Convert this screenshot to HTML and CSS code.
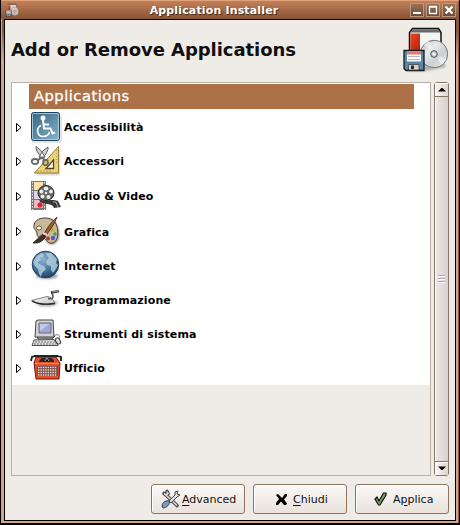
FILE: index.html
```html
<!DOCTYPE html>
<html lang="it">
<head>
<meta charset="utf-8">
<title>Application Installer</title>
<link rel="stylesheet" href="styles.css">
</head>
<body>
<svg class="defs" width="0" height="0">
  <defs>
    <linearGradient id="blue" x2="1" y2="1"><stop stop-color="#356381"/><stop offset="1" stop-color="#86b5cd"/></linearGradient>
    <radialGradient id="globe" cx=".4" cy=".3" r=".75"><stop stop-color="#8db4d0"/><stop offset=".6" stop-color="#457096"/><stop offset="1" stop-color="#183a5c"/></radialGradient>
    <linearGradient id="metal" x2="1" y2="1"><stop stop-color="#fff"/><stop offset="1" stop-color="#c0c2c3"/></linearGradient>
    <linearGradient id="disc" x2="1" y2="1"><stop stop-color="#b5b7b7"/><stop offset=".35" stop-color="#e9eaea"/><stop offset=".65" stop-color="#cccecf"/><stop offset="1" stop-color="#f5f5f5"/></linearGradient>
    <linearGradient id="red" x2="1" y2="1"><stop stop-color="#f04623"/><stop offset="1" stop-color="#aa220c"/></linearGradient>
    <filter id="soft" x="-20%" y="-20%" width="140%" height="150%"><feGaussianBlur stdDeviation="1"/></filter>
    <symbol id="installer" viewBox="0 0 48 54">
      <path d="M8 51h18l20-4-4-8H12z" fill="#777" opacity=".5" filter="url(#soft)"/>
      <path d="M9.500 34V12.500l3-4h26l2.500 4V34z" fill="#f4f4f3" stroke="#111" stroke-width="1.500"/>
      <path d="M10.300 12.500 13 9.200h25l2.500 3.300z" fill="#696969"/>
      <path d="M10.300 13.500H20V32h-9.700z" fill="url(#red)"/>
      <circle cx="34" cy="34" r="13.700" fill="url(#disc)" stroke="#747677"/>
      <path d="m29 29-5.500-5.500 5-3.500 4 8zM37 39l5 6 4-5-6-4z" fill="#fff" opacity=".45"/>
      <circle cx="34" cy="34" r="3.300" fill="#c5c7c7" stroke="#555"/><circle cx="34" cy="34" r="1.500" fill="#fff"/>
      <path d="M4 30.500h20V50.500H6l-2-2z" fill="#5b86a9" stroke="#131b23" stroke-width="1.300"/>
      <path d="M7 31.500h14v10H7z" fill="#fafafa"/><path d="M7 31.500h14v3H7z" fill="#dd7b70"/><path d="M8 36.500h12M8 39.500h12" stroke="#b8b8b8"/>
      <path d="M8.500 44.500h10.500V50H8.500z" fill="#d4d4cc" stroke="#333" stroke-width=".7"/><path d="M11 45.500h3V49h-3z" fill="#292929"/>
    </symbol>
  </defs>
</svg>
<main class="window">
  <header class="titlebar">
    <svg class="app-icon" viewBox="2 7 47 45"><use href="#installer" width="48" height="54"/></svg>
    <h1 class="window-title">Application Installer</h1>
    <div class="window-controls">
      <span class="control"><svg viewBox="0 0 14 14"><path d="M3 10h8" stroke="#fff" stroke-width="2"/></svg></span>
      <span class="control"><svg viewBox="0 0 14 14"><path d="M3.500 4h7v6.500h-7zM3 3.500h8" fill="none" stroke="#fff" stroke-width="1.300"/></svg></span>
      <span class="control"><svg viewBox="0 0 14 14"><path d="m3.500 3.500 7 7m0-7-7 7" stroke="#fff" stroke-width="2.300"/></svg></span>
    </div>
  </header>
  <section class="content">
    <div class="heading">
      <h2>Add or Remove Applications</h2>
      <svg class="heading-icon" viewBox="0 0 48 54"><use href="#installer" width="48" height="54"/></svg>
    </div>
    <div class="browser">
      <div class="list-frame">
        <div class="list">
          <div class="list-header">Applications</div>
          <div class="row"><svg class="arrow" viewBox="0 0 6 10"><path d="M.5.500v8l4.500-4z"/></svg>
            <svg class="icon" viewBox="1 0 32 32"><path d="M2 31h29V5" fill="none" stroke="#aaa" opacity=".6"/><rect x="1.500" y="1.500" width="28" height="28" rx="2" fill="url(#blue)" stroke="#204159"/><rect x="2.500" y="2.500" width="26" height="26" rx="1" fill="none" stroke="#b9d5e4" opacity=".8"/><circle cx="13" cy="7" r="2.500" fill="#fff"/><path d="m13 9 1 8.500h6.500l2 5 2.500-1M14 13.500h5" fill="none" stroke="#fff" stroke-width="2"/><path d="M11 14.500C5.500 17 7 25.500 13 25.500c4 0 6-2 6.500-4.500" fill="none" stroke="#fff" stroke-width="1.600"/></svg>
            <span>Accessibilità</span></div>
          <div class="row"><svg class="arrow" viewBox="0 0 6 10"><path d="M.5.500v8l4.500-4z"/></svg>
            <svg class="icon" viewBox="1 0 32 32"><path d="M29.500 3v27H5z" fill="#777" opacity=".4" filter="url(#soft)"/><path d="M28.500 1.500v26.500H4.500z" fill="#e9d27e" stroke="#9a7c2d"/><path d="M23.500 15v8.500H16z" fill="#fff" stroke="#53451c" stroke-width="1.300"/><path d="m27 5-1 1m1 2-1 1m1 2-1 1m1 2-1 1m1 2-1 1M8 27v-2m3 2v-2m3 2v-2m3 2v-2m3 2v-2" stroke="#967d36" stroke-width=".6"/><path d="M6 1.500Q5 5 12 13l3-1Q12 5 6 1.500zM18 2q1 4-6 12l-3-2q3-7 9-10z" fill="#d0d1d0" stroke="#555" stroke-width=".9"/><path d="m12 12 3 4m-4-3-3 2" stroke="#666" stroke-width="2"/><ellipse cx="5" cy="16.500" rx="3.300" ry="2.500" fill="none" stroke="#666" stroke-width="1.800"/><ellipse cx="15.500" cy="17.500" rx="2.400" ry="2.800" fill="none" stroke="#666" stroke-width="1.800"/></svg>
            <span>Accessori</span></div>
          <div class="row row-video"><svg class="arrow" viewBox="0 0 6 10"><path d="M.5.500v8l4.500-4z"/></svg>
            <svg class="icon" viewBox="0 0 32 32"><path d="M0 1h15v29H0z" fill="#777"/><path d="M3 2h9v8H3z" fill="#ffe2a6"/><path d="M3 11h9v8H3z" fill="#d9d5ef"/><path d="M3 20h9v8H3z" fill="#f1b7b9"/><circle cx="9" cy="25" r="2.500" fill="#df2035"/><path d="M1.500 2v28m12-28v28" stroke="#eee" stroke-dasharray="1.500 1.500"/><path d="M8 19c7 4 11-1 19 2l3 6-7 1c-1-5-8-3-14-6z" fill="#383838"/><path d="m22 22 3 0 2 5" fill="none" stroke="#aaa"/><ellipse cx="15" cy="13" rx="8" ry="7.500" fill="#666" stroke="#222"/><g fill="#eee"><ellipse cx="15" cy="8.500" rx="2.400" ry="2"/><circle cx="10.500" cy="11.500" r="2"/><circle cx="11.500" cy="16.500" r="2"/><circle cx="17.500" cy="17" r="2"/><circle cx="20" cy="11.500" r="2"/><circle cx="15" cy="13" r="1.200"/></g></svg>
            <span>Audio &amp; Video</span></div>
          <div class="row row-graphics"><svg class="arrow" viewBox="0 0 6 10"><path d="M.5.500v8l4.500-4z"/></svg>
            <svg class="icon" viewBox="0 0 32 32"><path d="M6 9C8 1 21 2 25 8s5 18-3 20c-6 1-5-3-8-5S2 18 6 9z" fill="#777" filter="url(#soft)"/><path d="M3 9C4 2 15 0 22 4c6 4 7 21 0 23-6 1-6-3-9-5S6 23 6 18s-4-4-3-9z" fill="#c8b99b" stroke="#50412c"/><ellipse cx="8" cy="12" rx="2.500" ry="2" fill="#fff" stroke="#66543b"/><circle cx="21.500" cy="14" r="2" fill="#c6b420"/><circle cx="24" cy="18" r="1.700" fill="#569344"/><circle cx="22" cy="22" r="2.200" fill="#4861c0"/><circle cx="17" cy="22.500" r="2" fill="#c53227"/><path d="M26 1c-5 4-9 10-12 15L2 27c7 0 10-2 14-9C20 13 24 7 26 1z" fill="#9b602e" stroke="#332414" stroke-width=".8"/><path d="m13 17 3 2C12 26 8 28 2 27z" fill="#36312b"/><path d="m12 17 4 2" stroke="#ddd" stroke-width="2"/></svg>
            <span>Grafica</span></div>
          <div class="row"><svg class="arrow" viewBox="0 0 6 10"><path d="M.5.500v8l4.500-4z"/></svg>
            <svg class="icon" viewBox="0 0 32 32"><ellipse cx="16" cy="26" rx="11" ry="3" fill="#999" filter="url(#soft)"/><circle cx="14.500" cy="14.500" r="13.300" fill="url(#globe)" stroke="#1d4265"/><path d="m2 12 4-6 5-3 2 2-2 3-2-1 1 3-3 2 1 2 5 2 2 3-4 4-1 4-2-3-1-5-3-3zM15 3l5 0 3 3 3 3-1 4 2 2-2 4-3 4-2-3 0-4-4-1-1-4 3-3-2-2z" fill="#b5d1df" opacity=".8"/></svg>
            <span>Internet</span></div>
          <div class="row"><svg class="arrow" viewBox="0 0 6 10"><path d="M.5.500v8l4.500-4z"/></svg>
            <svg class="icon" viewBox="0 0 32 32"><path d="M4 20c7 4 16 3 21 1l2-4z" fill="#888" opacity=".6" filter="url(#soft)"/><path d="M.5 16.500 16 12.500q5 0 8 6.500Q9 23 .5 16.500z" fill="url(#metal)" stroke="#666" stroke-width=".8"/><path d="M1 17.200q9 4.500 23 2.300" fill="none" stroke="#222" stroke-width="1.300"/><path d="M17 14.500q5 1 5-2l-1-4.500" fill="none" stroke="#555" stroke-width="1.600"/><path d="m20 8.500 8-1.500" stroke="#333" stroke-width="2.600"/><path d="m21 8 7-1.300" stroke="#bbb" stroke-width=".9"/></svg>
            <span>Programmazione</span></div>
          <div class="row"><svg class="arrow" viewBox="0 0 6 10"><path d="M.5.500v8l4.500-4z"/></svg>
            <svg class="icon" viewBox="0 0 32 32"><path d="M3 28h25" stroke="#777" stroke-width="3" filter="url(#soft)"/><path d="m6 18 1 3h14l3-3z" fill="#aaa" stroke="#444"/><path d="m5 3 2-1h15l1 17H4z" fill="#d2d3d2" stroke="#444"/><path d="M8 5h12v10H8z" fill="#a1a8d4" stroke="#686b85"/><path d="M9 6h9L9 13z" fill="#c4caeb"/><path d="m3 22 20-.500 4 6H1z" fill="#ddd" stroke="#555"/><path d="m4 24h20M3 26h22" stroke="#777" stroke-dasharray="2 1"/><path d="M23 18c7-5 7 5 3 4" fill="none" stroke="#777"/><ellipse cx="27" cy="23" rx="2.200" ry="3.300" fill="#ddd" stroke="#444" transform="rotate(-30 27 23)"/></svg>
            <span>Strumenti di sistema</span></div>
          <div class="row"><svg class="arrow" viewBox="0 0 6 10"><path d="M.5.500v8l4.500-4z"/></svg>
            <svg class="icon" viewBox="0 0 32 32"><path d="M5 28h25" stroke="#777" stroke-width="3" filter="url(#soft)"/><path d="M5 5h20l4 6-1 16H5L3 11z" fill="#e64d2c" stroke="#68180d"/><path d="M3 4h24" stroke="#222" stroke-width="2"/><path d="M0 9l1-4 3-1M30 9V5l-4-1" fill="none" stroke="#171717" stroke-width="1.800"/><path d="M8 10q1-4 4-4h7q4 0 4 4z" fill="#272727"/><path d="m14 9 2-3 2 3" stroke="#aaa"/><path d="M4 11.500h24" stroke="#ff8666"/><path d="M6 14h21v10H6z" fill="#6e4a45"/><path d="M7 15.500h19M7 18h19M7 20.500h19M7 23h19" stroke="#f3d9d0" stroke-width="1.500" stroke-dasharray="1.500 .9"/></svg>
            <span>Ufficio</span></div>
        </div>
      </div>
      <div class="scrollbar">
        <span class="step"><svg viewBox="0 0 8 5"><path d="M0 4.500 3.500 1h1L8 4.500z"/></svg></span>
        <span class="thumb"><i></i><i></i><i></i></span>
        <span class="step"><svg viewBox="0 0 8 5"><path d="M0 .5 3.500 4h1L8 .5z"/></svg></span>
      </div>
    </div>
    <footer class="actions">
      <button class="button button-advanced"><svg viewBox="0 0 20 20"><path d="M3 4.500 5 6l2-1.500L6 2.500M5.500 6.500 16 16.500" fill="none" stroke="#444" stroke-width="3.600" stroke-linecap="round"/><path d="M3 4.500 5 6l2-1.500L6 2.500M5.500 6.500 16 16.500" fill="none" stroke="#ddd" stroke-width="1.600"/><path d="M8 12 14 6l0-3 3-1-1 3 3 1-3 2-6 6z" fill="#ddd" stroke="#444"/><path d="M1 17c0-4 5-6 7-5 2 3-3 7-6 7z" fill="#7b9dc0" stroke="#2c3e53"/></svg><span><u>A</u>dvanced</span></button>
      <button class="button button-close"><svg viewBox="0 0 13 13"><path d="M1 2 3 1l4 4 3-4h2v2L9 6.500l3 4-1 1.500H9L6 8.500 3 12H1v-2l3-4z"/></svg><span><u>C</u>hiudi</span></button>
      <button class="button button-apply"><svg viewBox="0 0 13 14"><path d="M1 7 3 5l2 4L9.500 1H12v2L6 13H4.500z" fill="#79a568" stroke="#0b130a" stroke-width="1.200"/></svg><span>A<u>p</u>plica</span></button>
    </footer>
  </section>
</main>
</body>
</html>
```
FILE: styles.css
```css
* { box-sizing: border-box; }
body {
  margin: 0;
  background: #000;
  color: #101010;
  font-family: "DejaVu Sans", sans-serif;
}
h1, h2 { margin: 0; }
svg { display: block; flex: none; overflow: visible; }
.defs { position: absolute; }
.window {
  width: 459px;
  height: 523px;
  margin-left: 1px;
  padding: 1px 4px 2px 3px;
  background: linear-gradient(#bd7b52 0, #8b5638 18px, #8b5638 30px, #d4a48a 60px, #d4a48a);
  border-right: 1px solid #000;
  box-shadow: inset 1px 1px #e0a17b, inset -1px 0 #8b5a40;
}
.titlebar {
  display: flex;
  align-items: center;
  height: 18px;
  margin: 0 -3px;
  padding: 0 2px 0 4px;
  background: linear-gradient(#c18059, #895336);
}
.app-icon { width: 14px; height: 14px; opacity: .75; }
.window-title {
  flex: 1;
  margin-right: 1px;
  color: #fff;
  text-align: center;
  text-shadow: 1px 1px 1px #402718;
  font-size: 11px;
  letter-spacing: .15px;
  white-space: nowrap;
}
.window-controls { display: flex; gap: 2px; }
.control {
  width: 14px;
  height: 14px;
  border: 1px solid #b99883;
  background: linear-gradient(#9c7157, #694a38);
}
.control svg { width: 14px; height: 14px; margin: -1px; }
.content {
  height: 502px;
  width: 452px;
  padding: 0 6px;
  border: 1px solid #000;
  background: #efebe7;
}
.heading {
  display: flex;
  justify-content: space-between;
  height: 62px;
}
.heading h2 {
  padding-top: 18px;
  font-size: 18px;
  letter-spacing: -.06px;
  line-height: 24px;
  white-space: nowrap;
}
.heading-icon { width: 48px; height: 54px; margin-right: 1px; }
.browser { display: flex; gap: 3px; height: 394px; }
.list-frame { width: 420px; border: 1px solid #b9afa4; }
.list { height: 302px; padding-top: 1px; background: #fff; }
.list-header {
  width: 385px;
  height: 25px;
  margin: 0 0 1px 17px;
  padding-left: 5px;
  color: #fff;
  background: #ad7148;
  font-size: 14.7px;
  letter-spacing: .5px;
  line-height: 24px;
  -webkit-text-stroke: .3px #fff;
}
.row {
  display: flex;
  align-items: center;
  height: 34px;
  padding-left: 4px;
  color: #000;
  font-size: 11px;
  font-weight: bold;
  letter-spacing: .13px;
  white-space: nowrap;
}
.row-video { height: 36px; }
.row-graphics { height: 35px; }
.row-graphics span { padding-top: 1px; }
.arrow { width: 6px; height: 10px; margin: 1px 9px 0 0; }
.arrow path { fill: #fff; stroke: #000; }
.icon { width: 32px; height: 32px; margin-right: 1px; }
.scrollbar {
  display: flex;
  flex-direction: column;
  width: 15px;
  height: 394px;
  border: 1px solid #827466;
  border-radius: 3px;
  background: #ded8d3;
}
.step {
  display: flex;
  align-items: center;
  justify-content: center;
  height: 13px;
  background: linear-gradient(90deg, #faf8f6, #dcd5d0);
  box-shadow: inset 1px 1px #fff;
}
.step svg { width: 8px; height: 5px; }
.thumb {
  display: flex;
  flex: 1;
  flex-direction: column;
  align-items: center;
  justify-content: center;
  gap: 1px;
  border: 1px solid #827466;
  border-width: 1px 0;
  background: linear-gradient(90deg, #fff 1px, #ebe7e4 1px, #d8d1cc);
}
.thumb i { width: 7px; height: 2px; border-top: 1px solid #b5aca4; background: #fff; }
.actions { display: flex; justify-content: flex-end; gap: 8px; padding: 8px 0 0; }
.button {
  display: flex;
  align-items: center;
  width: 94px;
  height: 30px;
  padding: 0 9px;
  border: 1px solid #8c7561;
  border-radius: 3px;
  background: linear-gradient(#faf8f6, #eae2dc);
  box-shadow: inset 1px 1px #fff;
  color: #101010;
  font: 11px "DejaVu Sans", sans-serif;
  white-space: nowrap;
}
.button u { text-underline-offset: 2px; }
.button-advanced svg { width: 20px; height: 20px; margin-right: 1px; }
.button-close { padding-left: 21px; }
.button-close svg { width: 13px; height: 13px; margin-right: 5px; }
.button-apply { padding-left: 18px; }
.button-apply svg { width: 13px; height: 14px; margin-right: 6px; }
```
